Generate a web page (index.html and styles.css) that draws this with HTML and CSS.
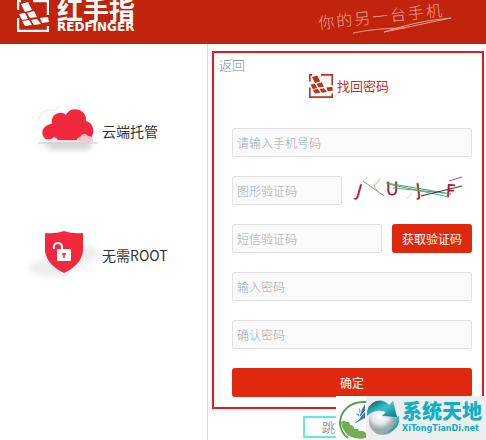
FILE: index.html
```html
<!DOCTYPE html>
<html lang="zh-CN">
<head>
<meta charset="utf-8">
<title>红手指 - 找回密码</title>
<link rel="stylesheet" href="styles.css">
</head>
<body>
<svg class="defs" aria-hidden="true">
  <symbol id="mark" viewBox="0 0 32 32">
    <path d="M4 1H1v9M1 18v13h30v-5M16 1h15v14" fill="none" stroke="currentColor" stroke-width="2.400"/>
    <path d="M4 4l7-2 4 8-7 2zM2 14l6-1 3 6-6 1zM10 13l7-2 3 6-7 1zM5 21l7-1 3 5-7 1zM14 20l6-1 4 5-7 1zM23 18l8-1 1 5-7 1z" fill="currentColor"/>
  </symbol>
</svg>
<header class="top">
  <a class="brand" href="#">
    <svg class="brand-mark"><use href="#mark"/></svg>
    <span class="brand-text"><span class="brand-cn">红手指</span><span class="brand-en">REDFINGER</span></span>
  </a>
  <div class="slogan">
    <span class="slogan-text">你的另一台手机</span>
    <svg class="slogan-line" viewBox="0 0 100 17" aria-hidden="true"><path d="M1 16Q25 11 53 11M32 15Q64 4 99 1Q66 8 32 15" fill="none" stroke="currentColor"/></svg>
  </div>
</header>
<div class="page">
  <aside class="features">
    <div class="feature">
      <svg class="feature-icon" viewBox="0 0 76 60" aria-hidden="true">
        <defs><filter id="soft" x="-30%" y="-60%" width="160%" height="220%"><feGaussianBlur stdDeviation="3"/></filter></defs>
        <path d="M14 40h54l-5 8H25z" fill="#ccc" filter="url(#soft)"/>
        <path d="M14 39l5-5h46l7 5v2H12z" fill="#fff"/>
        <path d="M12 42h60" stroke="#ccc"/>
        <path d="M12 19q4-12 17-10l5-4" fill="none" stroke="#f3dddd"/>
        <path d="M27 40C13 40 13 24 26 23C24 12 36 9 40 14C45 4 61 8 60 20C71 23 69 40 58 40Z" fill="#f2293d"/>
        <path d="M20 41l1-3h4q4-4 7 1h20l-1 2z" fill="#ffe3e3"/>
        <path d="M52 41q-3-4 2-5q4-6 8-1q5-1 5 6z" fill="#ffc4c8"/>
      </svg>
      <span>云端托管</span>
    </div>
    <div class="feature">
      <svg class="feature-icon" viewBox="0 0 76 60" aria-hidden="true">
        <path d="M3 44Q5 35 20 34L60 21Q78 22 70 33L38 51Q6 54 3 44" fill="#ededed" filter="url(#soft)"/>
        <path d="M19 8Q30 9 38 6Q46 9 57 8V26Q55 40 38 48Q21 40 19 26Z" fill="#f2293d"/>
        <path d="M28 24q-1-6 4-6q3 0 4 3v5" fill="none" stroke="#fff" stroke-width="2"/>
        <rect x="31" y="24" width="14" height="12" rx="1" fill="#fff"/>
        <path d="M38 28v5M36 29h4" stroke="#f2293d" stroke-width="1.500"/>
      </svg>
      <span>无需ROOT</span>
    </div>
  </aside>
  <main class="content">
    <form class="panel">
      <a class="back" href="#">返回</a>
      <h1 class="title"><svg class="title-mark" aria-hidden="true"><use href="#mark"/></svg>找回密码</h1>
      <div class="fields">
        <input class="field" type="tel" aria-label="手机号码" placeholder="请输入手机号码">
        <div class="row row-captcha">
          <input class="field" type="text" aria-label="图形验证码" placeholder="图形验证码">
          <svg class="captcha" viewBox="0 0 120 29" role="img" aria-label="图形验证码图片">
            <g class="captcha-letters">
              <text x="5" y="21" transform="rotate(16 8 14)">J</text>
              <text x="34" y="19">U</text>
              <text x="64" y="20" transform="rotate(-8 67 14)">J</text>
              <text x="94" y="21" transform="rotate(4 98 14)">F</text>
            </g>
            <g fill="none">
              <path d="M11 5l21 15" stroke="#6f9ba8"/>
              <path d="M28 3l-6 7 5 7" stroke="#d0b36a"/>
              <path d="M34 7l65 11" stroke="#668c5c"/>
              <path d="M36 8l61 13M41 12l52 5" stroke="#4bab72"/>
              <path d="M69 20l41-10" stroke="#333"/>
              <path d="M97 5l13-4" stroke="#8350a8"/>
              <path d="M55 23l5-6" stroke="#b8e0df"/>
            </g>
          </svg>
        </div>
        <div class="row">
          <input class="field" type="text" aria-label="短信验证码" placeholder="短信验证码">
          <button class="button code" type="button">获取验证码</button>
        </div>
        <input class="field" type="password" aria-label="输入密码" placeholder="输入密码">
        <input class="field" type="password" aria-label="确认密码" placeholder="确认密码">
        <button class="button submit" type="submit">确定</button>
      </div>
    </form>
    <a class="jump" href="#">跳转</a>
  </main>
</div>
<div class="watermark">
  <svg class="watermark-leaf" viewBox="0 0 30 44" aria-hidden="true">
    <path d="M30 6C13 5 4 16 4 28Q5 37 12 42" fill="none" stroke="#559e4c" stroke-width="2"/>
    <path d="M5 26q3-3 5 0q4-1 4 3q4 0 4 4q4-1 5 2q4-1 7 2v5q-9 2-17-2Q6 35 5 26" fill="#72ad55"/>
    <path d="M29 8l-4 7-2-3 1 7-4-2 4 5-6 6 7-4 4-2z" fill="#3978b8"/>
    <path d="M26 11l-3 10M29 15l-8 10" stroke="#fff"/>
  </svg>
  <div class="watermark-main">
    <svg class="watermark-globe" viewBox="0 0 36 44" aria-hidden="true">
      <defs>
        <radialGradient id="ball" cx=".4" cy=".3"><stop offset="0" stop-color="#fff"/><stop offset=".6" stop-color="#e3e8ea"/><stop offset="1" stop-color="#9da9ad"/></radialGradient>
        <linearGradient id="arrow" x2="1" y2="1"><stop offset="0" stop-color="#064c5b"/><stop offset=".5" stop-color="#35c2cf"/><stop offset="1" stop-color="#087784"/></linearGradient>
      </defs>
      <circle cx="17" cy="25" r="14" fill="url(#ball)"/>
      <path d="M1 20Q0 9 10 5q8-2 13 4l4-4 4 16-15-1 4-4q-10-4-19 4z" fill="url(#arrow)"/>
      <path d="M30 22l3-2q2 15-16 18 12-5 13-16" fill="url(#arrow)"/>
    </svg>
    <span class="watermark-text"><span class="watermark-cn">系统天地</span><span class="watermark-en">XiTongTianDi.net</span></span>
  </div>
</div>
</body>
</html>
```
FILE: styles.css
```css
* {
  box-sizing: border-box;
}

body {
  margin: 0;
  height: 100vh;
  display: flex;
  flex-direction: column;
  overflow: hidden;
  background: #fff;
  color: #333;
  font-family: "Noto Sans CJK SC", sans-serif;
  font-size: 12px;
  line-height: 20px;
  font-weight: 300;
}

a {
  color: inherit;
  text-decoration: none;
}

svg {
  display: block;
  flex: none;
}

.defs {
  position: absolute;
  width: 0;
  height: 0;
}

.top {
  flex: none;
  display: flex;
  justify-content: space-between;
  align-items: flex-end;
  height: 44px;
  padding: 0 34px 12px 17px;
  background: #c0240d;
  color: #fff;
}

.brand {
  display: flex;
  align-items: flex-end;
  gap: 8px;
}

.brand-mark {
  width: 32px;
  height: 32px;
}

.brand-text {
  display: flex;
  flex-direction: column;
}

.brand-cn {
  font-size: 26px;
  font-weight: 700;
  line-height: 26px;
}

.brand-en {
  font-family: "DejaVu Sans", sans-serif;
  font-size: 12px;
  font-weight: 700;
  line-height: 10px;
}

.slogan {
  margin-bottom: -2px;
  color: #f0a08c;
}

.slogan-text {
  display: block;
  font-size: 16px;
  letter-spacing: 2px;
  transform: rotate(-6deg);
}

.slogan-line {
  width: 100px;
  height: 17px;
  margin: -8px 0 0 34px;
}

.page {
  flex: 1;
  display: flex;
}

.features {
  flex: 0 0 208px;
  display: flex;
  flex-direction: column;
  gap: 64px;
  padding: 57px 0 0 26px;
  border-right: 1px solid #ddd;
  font-size: 14px;
  font-weight: 400;
}

.feature {
  display: flex;
  align-items: center;
}

.feature-icon {
  width: 76px;
  height: 60px;
}

.content {
  flex: 1;
  display: flex;
  flex-direction: column;
  align-items: center;
  gap: 7px;
  padding: 7px 2px 0 4px;
}

.panel {
  align-self: stretch;
  padding: 2px 10px 10px 18px;
  border: 2px solid #e01c1c;
}

.back {
  display: block;
  margin-left: -13px;
  color: #888;
  font-size: 13px;
}

.title {
  display: flex;
  justify-content: center;
  align-items: center;
  gap: 4px;
  margin: -1px 6px 30px 0;
  color: #c0311c;
  font-size: 13px;
  font-weight: 400;
  line-height: 24px;
}

.title-mark {
  width: 24px;
  height: 24px;
}

.fields {
  display: flex;
  flex-direction: column;
  gap: 19px;
}

.row {
  display: flex;
  gap: 10px;
}

.row-captcha {
  align-items: center;
}

.field {
  flex: 1;
  width: 100%;
  min-width: 0;
  min-height: 29px;
  padding: 0 4px;
  border: 1px solid #e2e2e2;
  border-radius: 2px;
  background: #fafafa;
  color: #333;
  font: inherit;
}

.field::placeholder {
  color: #a0a8ad;
}

.captcha {
  width: 120px;
  height: 29px;
}

.captcha-letters {
  fill: #b51c2b;
  stroke: #b51c2b;
  font-family: "DejaVu Sans", sans-serif;
  font-size: 17px;
}

.button {
  height: 29px;
  padding: 0;
  border: 0;
  border-radius: 3px;
  background: #de290f;
  color: #fff;
  font: inherit;
  font-weight: 400;
}

.code {
  flex: 0 0 80px;
}

.jump {
  width: 98px;
  margin-left: 8px;
  padding: 0 17px;
  border: 2px solid #5fe8ea;
  color: #777;
  font-size: 13px;
  line-height: 18px;
}

.watermark {
  position: fixed;
  right: 0;
  bottom: 0;
  display: flex;
  background: #fff;
}

.watermark-leaf {
  width: 30px;
  height: 44px;
}

.watermark-main {
  display: flex;
  align-items: center;
  width: 120px;
  background: #eee;
}

.watermark-globe {
  width: 36px;
  height: 44px;
}

.watermark-text {
  display: flex;
  flex-direction: column;
  color: #0db0c4;
}

.watermark-cn {
  font-size: 20px;
  font-weight: 900;
  line-height: 22px;
}

.watermark-en {
  font-family: "DejaVu Sans", sans-serif;
  font-size: 8px;
  font-weight: 700;
  line-height: 14px;
}
```
